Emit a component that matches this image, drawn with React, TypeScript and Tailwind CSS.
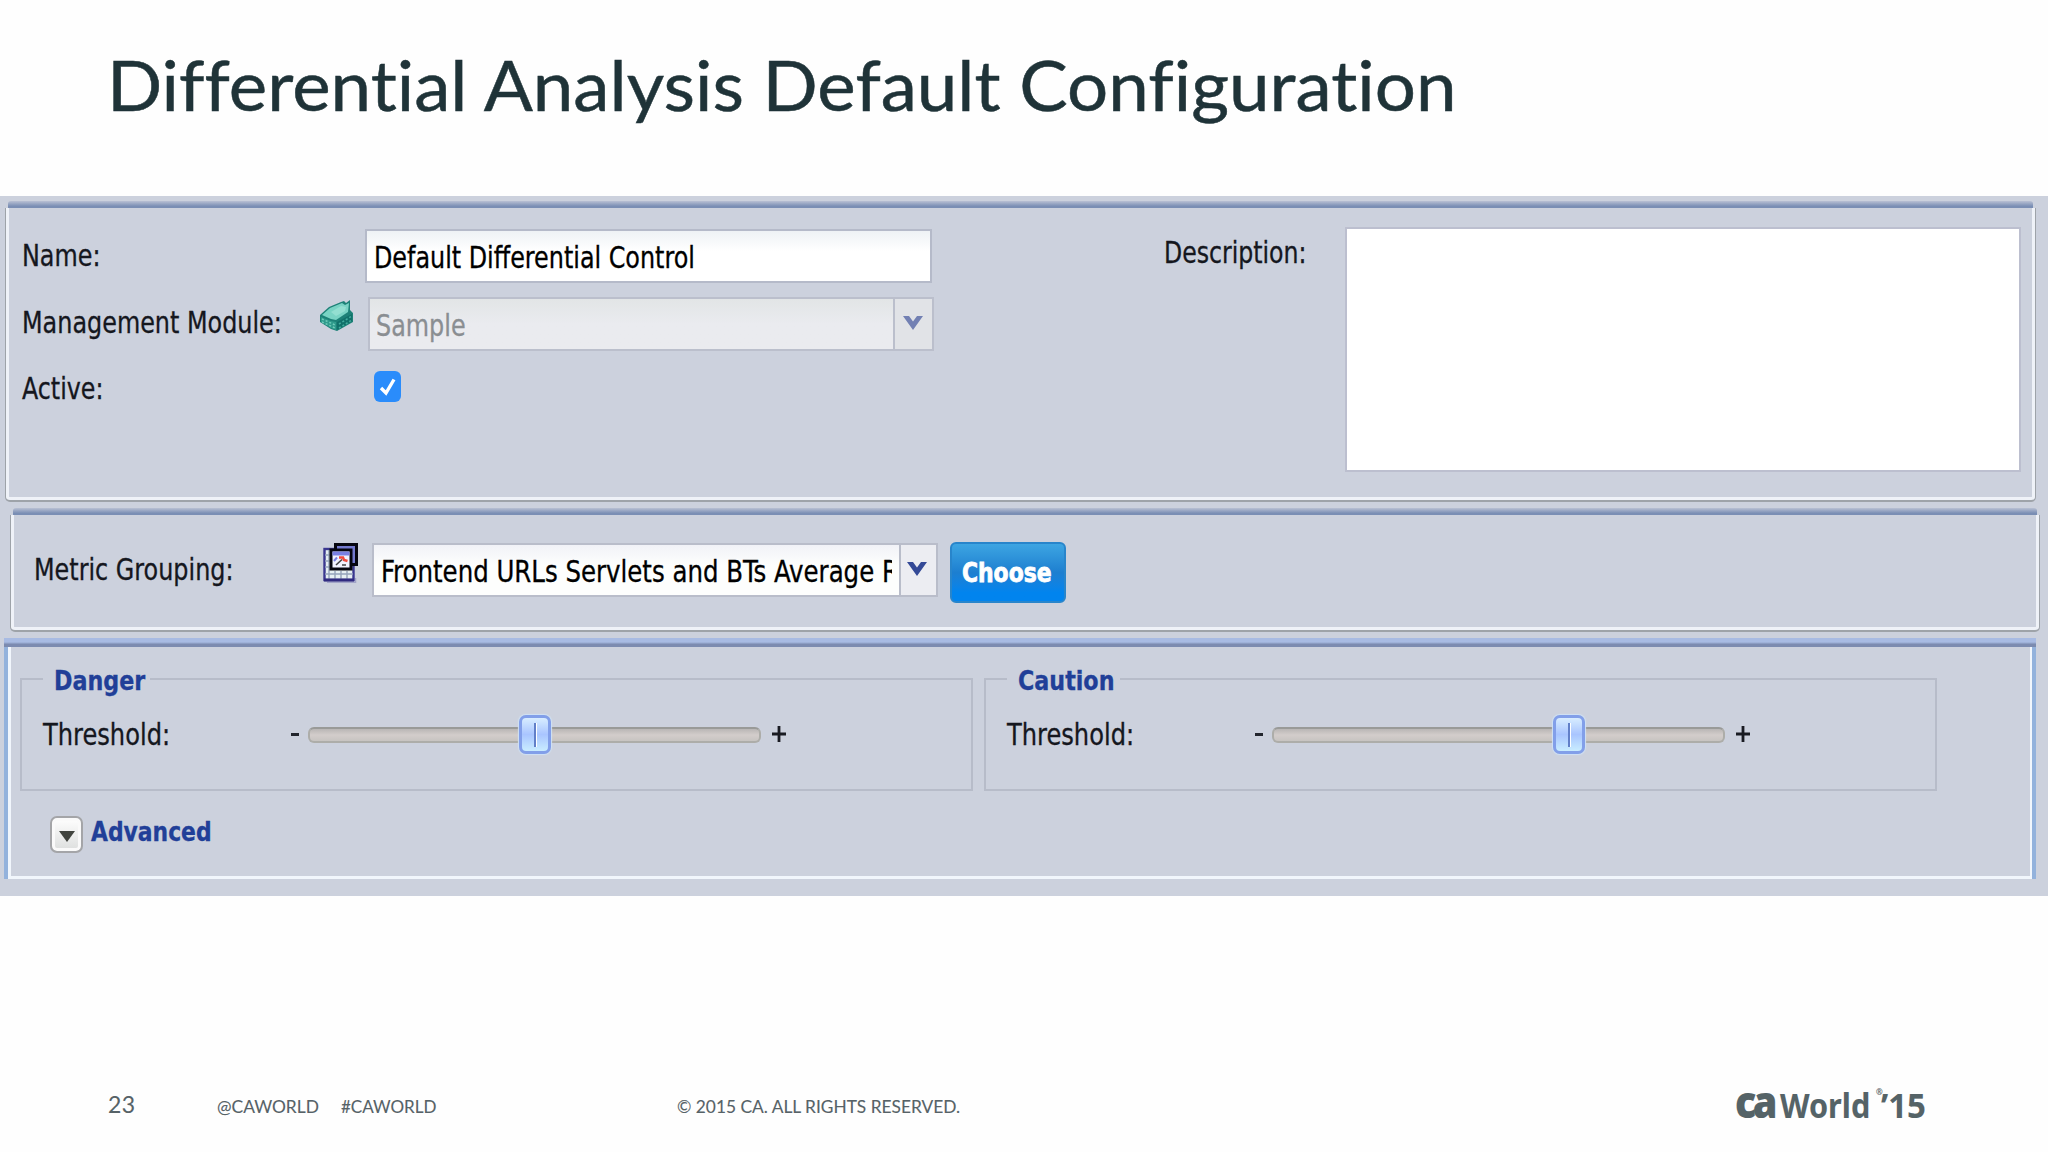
import { useState, type ReactNode } from "react";
import clsx from "clsx";

const formFont = "font-['DejaVu_Sans_Condensed','DejaVu_Sans',sans-serif]";

function Label({ children, className }: { children: ReactNode; className?: string }) {
  return (
    <span
      className={clsx(
        "block w-0 origin-left whitespace-nowrap leading-none",
        className
      )}
    >
      <span className="inline-block">{children}</span>
    </span>
  );
}

function ChevronDown({ className }: { className?: string }) {
  return (
    <svg viewBox="0 0 20 14" className={clsx("h-[14px] w-5", className)}>
      <path d="M0 0H6L10 5.5L14 0H20L10 14Z" fill="currentColor" />
    </svg>
  );
}

function ModuleIcon() {
  return (
    <svg viewBox="0 0 36 32" className="h-8 w-9">
      <path d="M1 15L10 7L22 2L25 1L27 3L31 0V10L34 13V22L18 31L12 29L1 22Z" fill="#1d8177" />
      <path d="M3 15L11 8L23 3L26 5L30 3L29 12L17 20L12 19Z" fill="#79d3c4" />
      <path d="M12 12L22 6L27 7L26 11L17 16Z" fill="#93dfd1" />
      <path d="M2 17L12 21L17 22V30L12 28L2 22Z" fill="#2f9b8c" />
      <path d="M18 22L33 14V21L18 30Z" fill="#11716a" />
      <path d="M3 19L16 25M3 22L16 28" stroke="#6fcab9" strokeWidth="1.5" strokeDasharray="2 2" />
      <path d="M20 24L33 16M20 28L33 20" stroke="#43ae9f" strokeWidth="1.5" strokeDasharray="2 2" />
    </svg>
  );
}

function MetricIcon() {
  return (
    <svg viewBox="0 0 36 40" className="h-10 w-9">
      <path d="M4 39.5H32.5V35" stroke="#a2a5c8" strokeWidth="1.5" fill="none" />
      <rect x="1.5" y="6" width="29" height="31" fill="#e6eff2" stroke="#3a3790" strokeWidth="2.4" />
      <path d="M6 7V36M12 28V36M18 28V36M24 28V36M2 12H8M2 18H8M2 24H8M2 31H30" stroke="#94a3ba" strokeWidth="1.4" />
      <path d="M1 37H31" stroke="#302a80" strokeWidth="3" />
      <rect x="12.5" y="1.5" width="21" height="20" fill="#7379ce" stroke="#06060f" strokeWidth="3" />
      <rect x="8" y="7" width="20" height="19" fill="#f1f2ff" stroke="#06060f" strokeWidth="3" />
      <path d="M9.5 8.5H26.5V12.5H9.5Z" fill="#7a80e2" />
      <path d="M11 18L14 14.5" stroke="#7a80e2" strokeWidth="2" />
      <path d="M16 14.5H20L21 17L24.5 18" stroke="#f04a3d" strokeWidth="2.5" fill="none" />
      <path d="M13 22L19 16.5M19 22H23" stroke="#444" strokeWidth="1.6" />
    </svg>
  );
}

function Panel({
  children,
  className,
  focused,
}: {
  children: ReactNode;
  className: string;
  focused?: boolean;
}) {
  return (
    <section className={clsx("flex flex-col", className)}>
      {focused ? (
        <div className="h-[9px] bg-linear-to-b from-[#a8bbe3] from-45% to-[#7c8bb0] to-70%" />
      ) : (
        <div className="mx-[3px] h-[7px] rounded-t-[3px] bg-linear-to-b from-[#b9c0d3] to-[#7a8eb4] to-75%" />
      )}
      <div
        className={clsx(
          "flex-1",
          focused
            ? "border-x-4 border-[#93b2dc] shadow-[inset_3px_0_0_#f1f6fc,inset_-2px_0_0_#f1f6fc,inset_0_-3px_0_#f1f6fc]"
            : "rounded-b-[5px] border border-t-0 border-b-2 border-[#9ea3a9] shadow-[inset_3px_0_0_#eff2f8,inset_-3px_0_0_#eff2f8,inset_0_-3px_0_#eff2f8]"
        )}
      >
        {children}
      </div>
    </section>
  );
}

function Threshold({ title, value, legendWidth }: { title: string; value: number; legendWidth: string }) {
  return (
    <div className="h-[113px] w-[953px]">
      {/* legend breaks the top border */}
      <div className="flex h-0.5">
        <div className="w-[23px] bg-[#b7bcc9]" />
        <div className={legendWidth}>
          <Label className="-mt-[11px] ml-[11px] scale-x-[.915] text-[27px] font-bold text-[#213f98]">{title}</Label>
        </div>
        <div className="flex-1 bg-[#b7bcc9]" />
      </div>
      <div className="flex h-[111px] border-2 border-t-0 border-[#b7bcc9]">
        <div className="mt-10 ml-[21px] w-[248px]">
          <Label className="scale-x-[.895] text-[30px]">Threshold:</Label>
        </div>
        <div className="mt-[53px] h-[3px] w-2 bg-[#22252d]" />
        <div className="relative mt-[47px] ml-[9px] h-4 w-[453px] rounded-[6px] border-2 border-[#adada9] border-t-[#999a98] bg-linear-to-b from-[#b9b6b5] via-[#d3cdcb] to-[#c7c4c1]">
          <div
            className="absolute -top-[14px] flex h-[39px] w-[32px] items-center justify-center rounded-[7px] border-[3px] border-[#829fe9] bg-linear-to-b from-[#d8edff] via-[#a9c5ff] to-[#c9edff] shadow-[0_0_1px_1px_#cfe2f5]"
            style={{ left: value }}
          >
            <div className="h-6 w-[3px] border-r border-white bg-[#617fc8]" />
          </div>
        </div>
        <svg viewBox="0 0 14 16" className="mt-[46px] ml-[11px] h-4 w-[14px]">
          <path d="M0 8H14M7 0V16" stroke="#191b22" strokeWidth="2.8" />
        </svg>
      </div>
    </div>
  );
}

export default function App() {
  const [active, setActive] = useState(true);

  return (
    <div className="flex h-[1152px] w-[2048px] flex-col overflow-hidden bg-[#fefefe]">
      <header className="h-[196px] pt-[50px] pl-[107px] font-[Lato,sans-serif] text-[#1f3338]">
        <h1 className="w-0 origin-left scale-x-[1.054] text-[69px] leading-none whitespace-nowrap [font-variant-ligatures:none] [-webkit-text-stroke:0.5px_#1f3338]">
          Differential Analysis Default Configuration
        </h1>
      </header>

      <main
        className={clsx(
          "h-[700px] bg-[#ccd1dd] pt-[5px] text-[#15171e] [-webkit-text-stroke:0.3px_currentColor]",
          formFont
        )}
      >
        <Panel className="ml-[5px] h-[301px] w-[2031px]">
          <div className="flex">
            <div className="w-[1158px] pt-[21px] pl-4">
              <div className="flex h-[53px]">
                <div className="mt-3 w-[343px]">
                  <Label className="scale-x-[.885] text-[30px]">Name:</Label>
                </div>
                <div className="h-[54px] w-[567px] border-2 border-[#b5bac9] bg-linear-to-b from-[#eef2f5] to-white to-40% pt-3 pl-[7px] text-black">
                  <Label className="scale-x-[.884] text-[30px]">Default Differential Control</Label>
                </div>
              </div>
              <div className="mt-[15px] flex h-[54px]">
                <div className="mt-[11px] w-[297px]">
                  <Label className="scale-x-[.885] text-[30px]">Management Module:</Label>
                </div>
                <div className="mt-[3px] w-[49px]">
                  <ModuleIcon />
                </div>
                <div className="flex w-[566px] border-2 border-[#bbbfcc] bg-linear-to-b from-[#e2e5e6] to-[#eaebef] to-50%">
                  <div className="w-[525px] border-r-2 border-[#bbbfcc] pt-3 pl-[6px] text-[#8a8e92]">
                    <Label className="scale-x-[.885] text-[30px]">Sample</Label>
                  </div>
                  <div className="flex-1 bg-[#e1e3e7] pt-[17px] pl-2 text-[#7280b3]">
                    <ChevronDown />
                  </div>
                </div>
              </div>
              <div className="mt-5 flex">
                <div className="mt-[3px] w-[352px]">
                  <Label className="scale-x-[.88] text-[30px]">Active:</Label>
                </div>
                <button
                  onClick={() => setActive(!active)}
                  className="h-[31px] w-[27px] rounded-[6px] bg-[#2a8cfb]"
                >
                  {active && (
                    <svg viewBox="0 0 27 31" className="h-[31px] w-[27px]">
                      <path d="M7 17L12 22L20 8.5" stroke="white" strokeWidth="3.4" fill="none" />
                    </svg>
                  )}
                </button>
              </div>
            </div>
            <div className="mt-[30px] w-[181px]">
              <Label className="scale-x-[.875] text-[30px]">Description:</Label>
            </div>
            <div className="mt-[19px] h-[245px] w-[676px] border-2 border-[#bcbfcf] bg-white" />
          </div>
        </Panel>

        <Panel className="mt-[6px] ml-[10px] h-[124px] w-[2030px]">
          <div className="flex pt-7 pl-[23px]">
            <div className="mt-3 w-[289px]">
              <Label className="scale-x-[.885] text-[30px]">Metric Grouping:</Label>
            </div>
            <div className="w-[49px]">
              <MetricIcon />
            </div>
            <div className="flex h-[54px] w-[566px] border-2 border-[#b9bdca] bg-linear-to-b from-[#f1f2f7] to-[#fdfefd] to-40%">
              <div className="w-[527px] border-r-2 border-[#b9bdca] pt-3 pl-[7px] text-black">
                <div className="h-9 w-[511px] overflow-hidden">
                  <Label className="scale-x-[.906] text-[30px]">Frontend URLs Servlets and BTs Average R</Label>
                </div>
              </div>
              <div className="flex-1 bg-[#ecedf2] pt-[17px] pl-[6px] text-[#344a97]">
                <ChevronDown />
              </div>
            </div>
            <button className="-mt-px ml-3 h-[61px] w-[116px] rounded-[6px] border-2 border-[#2885cb] bg-linear-to-b from-[#3da5e2] via-[#1d7fd0] via-50% to-[#0184ee] to-85% pl-[10px] text-left text-white [-webkit-text-stroke:0.8px_white]">
              <Label className="scale-x-[.9] text-[27px] font-bold">Choose</Label>
            </button>
          </div>
        </Panel>

        <Panel focused className="mt-[6px] ml-1 h-[241px] w-[2032px]">
          <div className="flex gap-[11px] pt-[31px] pl-3">
            <Threshold title="Danger" value={209} legendWidth="w-[107px]" />
            <Threshold title="Caution" value={279} legendWidth="w-[113px]" />
          </div>
          <div className="mt-[25px] ml-[42px] flex">
            <div className="flex h-[37px] w-[33px] items-center justify-center rounded-[7px] border-2 border-[#a4a5a8] bg-linear-to-b from-white to-[#dcdedd] pt-1 shadow-[inset_0_0_0_3px_#fafafa]">
              <svg viewBox="0 0 16 11" className="h-[11px] w-4">
                <path d="M0 0H16L8 11Z" fill="#41443f" />
              </svg>
            </div>
            <div className="mt-0.5 ml-2">
              <Label className="scale-x-[.9] text-[27px] font-bold text-[#213f98]">Advanced</Label>
            </div>
          </div>
        </Panel>
      </main>

      <footer className="flex pt-[194px] pl-[108px] font-[Lato,sans-serif] text-[18px] leading-none text-[#566267] [-webkit-text-stroke:0.1px_currentColor]">
        <div className="mt-[3px] w-[109px] text-[23px] leading-none tracking-[.5px]">23</div>
        <Label className="mt-[7px] mr-[124px] scale-x-[.965]">@CAWORLD</Label>
        <Label className="mt-[7px] mr-[336px] scale-x-[.945]">#CAWORLD</Label>
        <Label className="mt-[7px] mr-[1058px] scale-x-[.962]">© 2015 CA. ALL RIGHTS RESERVED.</Label>
        <div className="flex h-[34px] font-['Noto_Sans',sans-serif] text-[34px] leading-none text-[#556367]">
          <div className="w-[45px]">
            <span className="block w-0 origin-left scale-x-[.9] text-[44px] leading-[23px] font-black tracking-[-4px]">ca</span>
          </div>
          <div className="-mt-0.5 w-[96px]">
            <Label className="scale-x-[.9] font-bold">World</Label>
          </div>
          <div className="-mt-0.5 w-[5px] text-[8px]">®</div>
          <Label className="-mt-0.5 scale-x-[.97] font-bold">’15</Label>
        </div>
      </footer>
    </div>
  );
}
